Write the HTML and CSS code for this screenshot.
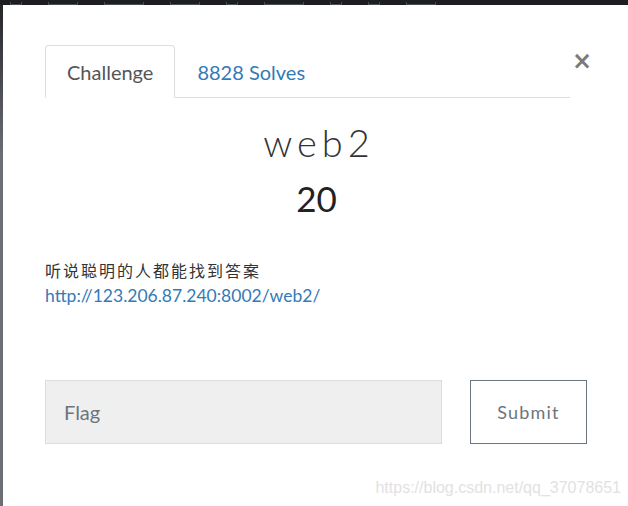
FILE: index.html
```html
<!DOCTYPE html>
<html lang="zh">
<head>
<meta charset="utf-8">
<title>web2</title>
<link rel="stylesheet" href="styles.css">
</head>
<body>
<div class="topbar"><i class="w1"></i><i class="w2"></i><i class="w3"></i><i class="w2"></i><i class="w1"></i><i class="w3"></i><i class="w1"></i><i class="w1"></i><i class="w2"></i></div>
<div class="page">
  <div class="sidebar"></div>
  <div class="modal">
    <div class="head">
      <ul class="tabs">
        <li class="tab active">Challenge</li>
        <li class="tab link">8828 Solves</li>
      </ul>
      <span class="close">&times;</span>
    </div>
    <h2 class="title">web2</h2>
    <h2 class="value">20</h2>
    <div class="desc">
      <p class="cn">听说聪明的人都能找到答案</p>
      <a class="url" href="#">http://123.206.87.240:8002/web2/</a>
    </div>
    <div class="form">
      <div class="flag">Flag</div>
      <button class="submit">Submit</button>
    </div>
    <div class="wm">https://blog.csdn.net/qq_37078651</div>
  </div>
</div>
</body>
</html>
```
FILE: styles.css
```css
html, body { margin: 0; padding: 0; }
body {
  background: #1c1e22;
  font-family: Lato, "Noto Sans CJK SC", sans-serif;
  width: 628px;
  height: 506px;
  overflow: hidden;
}
.topbar {
  height: 5px;
  display: flex;
  align-items: flex-end;
  gap: 26px;
  padding-left: 10px;
  box-sizing: border-box;
}
.topbar i {
  display: block;
  height: 3px;
  border-left: 1px solid #4a4d53;
  border-right: 1px solid #4a4d53;
  border-bottom: 1px solid #4a4d53;
  box-sizing: border-box;
}
.topbar .w1 { width: 12px; }
.topbar .w2 { width: 30px; }
.topbar .w3 { width: 40px; }
.page { display: flex; height: 501px; }
.sidebar { width: 4px; background: linear-gradient(#24262a, #6b6e73 30%, #6b6e73); }
.modal {
  position: relative;
  flex: 1;
  background: #fff;
  padding: 40px 40px 0 42px;
}
.head { display: flex; align-items: flex-start; }
.tabs {
  list-style: none;
  margin: 0;
  padding: 0;
  display: flex;
  width: 525px;
  border-bottom: 1px solid #dddddd;
}
.tab {
  font-size: 20px;
  line-height: 24px;
  padding: 14px 21px 13px 21px;
  margin-bottom: -1px;
  border: 1px solid transparent;
  border-radius: 4px 4px 0 0;
}
.tab.active {
  color: #555;
  border-color: #dddddd;
  border-bottom-color: #fff;
  background: #fff;
}
.tab.link { color: #337ab7; }
.close {
  margin-left: 2px;
  margin-top: 4px;
  font-size: 24px;
  line-height: 24px;
  color: #7a7a7a;
  font-family: "DejaVu Sans", sans-serif;
  font-weight: bold;
  width: 16px;
}
.title {
  margin: 24px 0 0;
  text-align: center;
  font-weight: 300;
  font-size: 38px;
  line-height: 40px;
  letter-spacing: 5px;
  padding-left: 5px;
  color: #333;
}
.value {
  margin: 16px 0 0;
  text-align: center;
  font-weight: 400;
  font-size: 35px;
  line-height: 40px;
  color: #222;
}
.desc { margin-top: 39px; font-size: 17.5px; line-height: 26px; }
.cn {
  margin: 0;
  color: #333;
  font-family: "Noto Sans CJK SC", sans-serif;
  font-size: 16px;
  letter-spacing: 2px;
}
.url { color: #337ab7; text-decoration: none; font-size: 17.5px; }
.form { display: flex; gap: 28px; margin-top: 71px; }
.flag {
  width: 377px;
  height: 62px;
  background: #efefef;
  border: 1px solid #dddddd;
  padding-left: 18px;
  display: flex;
  align-items: center;
  color: #6c757d;
  font-size: 20px;
}
.submit {
  width: 117px;
  height: 64px;
  background: #fff;
  border: 1px solid #6c757d;
  color: #6c757d;
  font-family: Lato, sans-serif;
  font-size: 18px;
  font-weight: 400;
  letter-spacing: 1.2px;
}
.wm {
  position: absolute;
  right: 7px;
  bottom: 9px;
  color: #e2e2e2;
  font-family: "Liberation Sans", Arial, sans-serif;
  font-size: 16px;
}
```
